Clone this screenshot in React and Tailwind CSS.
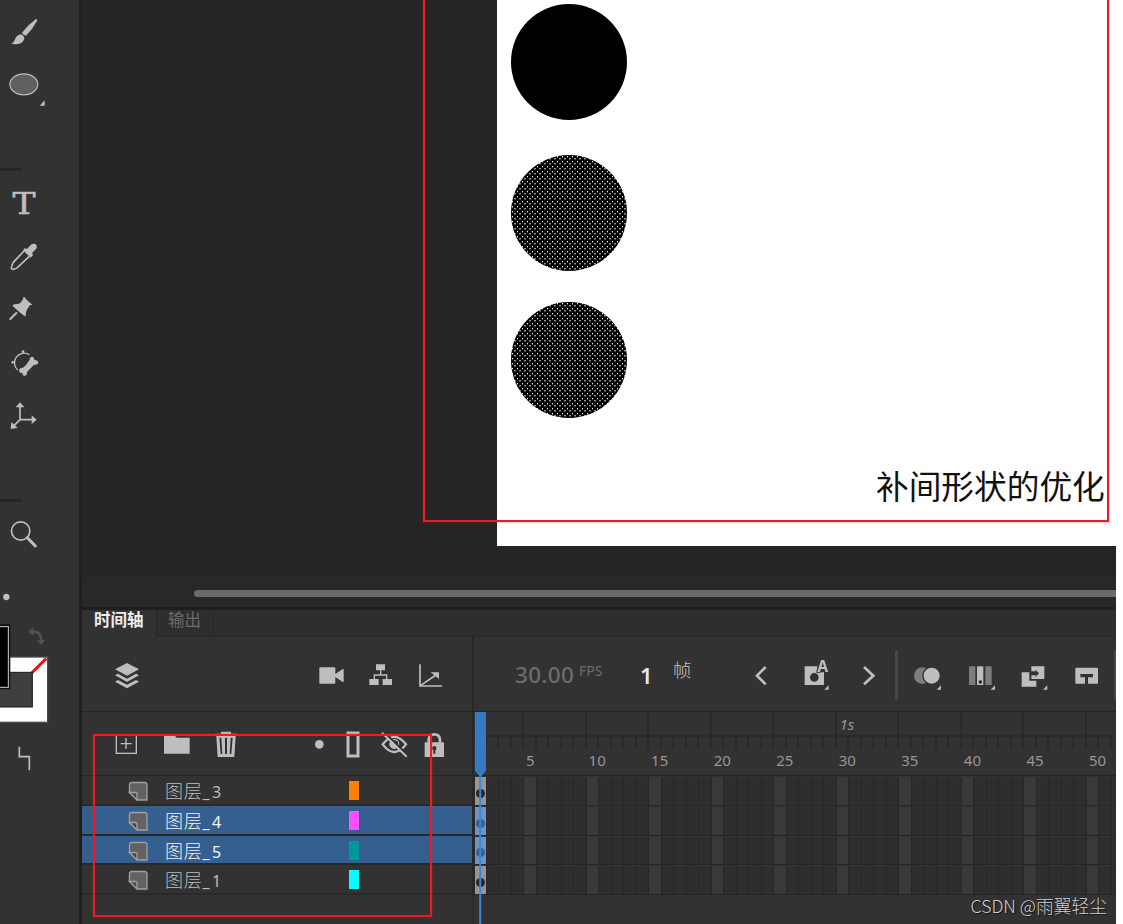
import React from "react";

const G = "#bebebe";

function Glyph({ w, h, box, className = "", children }) {
  return (
    <svg width={w} height={h} viewBox={box} className={"block shrink-0 " + className} fill="none">
      {children}
    </svg>
  );
}

function Toolbar() {
  return (
    <aside className="flex h-[924px] w-[82px] shrink-0 flex-col border-r-3 border-[#1f1f1f] bg-[#323232]">
      <Glyph w={79} h={60} box="0 0 237 180">
        <path d="M108 57Q113 57 111 63Q97 89 78 107Q71 107 66 98Q85 73 108 57Z" fill={G} />
        <path d="M62 103Q72 106 73 116Q68 133 46 133L34 131Q42 128 44 120Q48 107 62 103Z" fill={G} />
      </Glyph>
      <Glyph w={79} h={60} box="0 180 237 180">
        <ellipse cx="71.500" cy="253" rx="42" ry="31.500" fill="#606060" stroke={G} strokeWidth="3.500" />
        <path d="M134 301V317H119Z" fill={G} />
      </Glyph>
      <div className="mt-[48px] h-[3px] w-[21px] bg-[#262626]" />
      <div className="flex h-[59px] w-[48px] scale-x-115 items-center justify-center pt-[6px] font-['DejaVu_Serif'] text-[30px] leading-none text-[#bebebe] [-webkit-text-stroke:0.600px_#bebebe]">
        T
      </div>
      <Glyph w={79} h={55} box="0 0 237 165">
        <path d="M72 63L40 97Q32 112 35 116Q40 121 52 113L88 79" stroke={G} strokeWidth="5" />
        <path d="M69 61L75 54L80 58L92 45Q98 39 106 42Q114 48 108 57L96 69L99 75L92 83Z" fill={G} />
      </Glyph>
      <Glyph w={79} h={55} box="0 165 237 165">
        <path d="M71 200Q77 202 77 207L97 224L90 226Q86 230 79 244L76 260L57 245L38 228Q38 223 44 223L57 221Q68 214 71 200Z" fill={G} />
        <path d="M49 249L31 267" stroke={G} strokeWidth="6" strokeLinecap="round" />
      </Glyph>
      <Glyph w={79} h={52} box="0 330 237 156">
        <path d="M88 374A29 29 0 0 0 53 420" stroke={G} strokeWidth="4" />
        <circle cx="69" cy="365" r="4" fill={G} />
        <circle cx="38" cy="397" r="4" fill={G} />
        <path d="M89 389Q89 380 97 380Q104 383 103 390Q113 389 115 398Q113 406 102 404L81 426Q82 437 73 438Q66 436 68 429Q58 431 57 422Q58 412 69 413L78 405Z" fill={G} />
      </Glyph>
      <Glyph w={79} h={58} box="0 486 237 174">
        <path d="M60 528V569H99M60 569L40 589" stroke={G} strokeWidth="5" />
        <path d="M47 532L60 517L73 532ZM95 556L110 569L95 582ZM34 576L32 597L53 594Z" fill={G} />
      </Glyph>
      <div className="mt-[49px] h-[3px] w-[21px] bg-[#262626]" />
      <Glyph w={79} h={68} box="0 66 237 204">
        <circle cx="62" cy="153" r="27.500" stroke={G} strokeWidth="5" />
        <path d="M82 173L106 198" stroke={G} strokeWidth="9" strokeLinecap="round" />
      </Glyph>
      <Glyph w={79} h={174} box="0 270 237 522">
        <circle cx="19" cy="351" r="9.500" fill={G} />
        <path d="M96 455Q122 452 124 481" stroke="#515151" strokeWidth="8" />
        <path d="M85 455L100 442V468ZM110 480H136L124 495Z" fill="#515151" />
        <rect x="-6" y="531" width="149" height="196" fill="#fff" stroke="#4a4a4a" strokeWidth="4" />
        <path d="M95 579L139 535" stroke="#f01010" strokeWidth="9" />
        <rect x="-6" y="577" width="103" height="104" fill="#3f3f3f" stroke="#161616" strokeWidth="3" />
        <rect x="-6" y="433" width="37" height="195" fill="#111" />
        <rect x="-6" y="440" width="31" height="182" fill="#000" stroke="#d0d0d0" strokeWidth="3" />
      </Glyph>
      <Glyph w={79} h={40} box="0 792 237 120">
        <path d="M58 800V830H88V871" stroke={G} strokeWidth="5" />
      </Glyph>
    </aside>
  );
}

function DottedDisc() {
  return (
    <Glyph w={116} h={116} box="0 0 116 116">
      <defs>
        <pattern id="dots" width="5" height="5" patternUnits="userSpaceOnUse">
          <rect width="5" height="5" fill="#000" />
          <rect x="1" y="1" width="1" height="1" fill="#fff" />
          <rect x="1" y="2" width="1" height="1" fill="#555" />
          <rect x="3" y="3" width="2" height="1" fill="#909090" />
          <rect x="3" y="4" width="2" height="1" fill="#404040" />
        </pattern>
      </defs>
      <circle cx="58" cy="58" r="58" fill="url(#dots)" />
    </Glyph>
  );
}

function Stage() {
  return (
    <section className="flex h-[607px] flex-col bg-[#252525]">
      <div className="flex h-[546px] pl-[415px]">
        <div className="flex h-full flex-1 flex-col bg-white pl-[14px] pt-[3.500px]">
          <div className="size-[116px] rounded-full bg-black" />
          <div className="mt-[35.500px]"><DottedDisc /></div>
          <div className="mt-[31px]"><DottedDisc /></div>
          <p className="mt-[43px] whitespace-nowrap pl-[365px] font-['Noto_Sans_CJK_SC',sans-serif] text-[32.700px] leading-[48px] text-[#111]">
            补间形状的优化
          </p>
        </div>
      </div>
      <div className="mt-[31px] flex h-[30px] bg-[#282828] pl-[112px] pt-[13px]">
        <div className="h-[7px] flex-1 rounded-l-full bg-[#6b6b6b]" />
      </div>
    </section>
  );
}

function LeftControls() {
  return (
    <div className="flex h-[75px] w-[392px] shrink-0 border-r-2 border-[#282828]">
      <Glyph w={28} h={74} box="99 171 84 222" className="ml-[31px]">
        <path d="M141 249L177 268L141 287L105 268ZM105 286L114 281L141 296L168 281L177 286L141 306ZM105 305L114 300L141 314L168 300L177 305L141 325Z" fill={G} />
      </Glyph>
      <Glyph w={27} h={74} box="714 171 81 222" className="ml-[177px]">
        <path d="M721 262H763Q766 262 766 265V282L788 267H791V306H788L766 291V308Q766 311 763 311H721Q718 311 718 308V265Q718 262 721 262Z" fill={G} />
      </Glyph>
      <Glyph w={25} h={74} box="864 171 75 222" className="ml-[23px]">
        <path d="M888 253H915V271H888ZM868 297H896V315H868ZM908 297H936V315H908Z" fill={G} />
        <path d="M902 271V284M883 297V285H920V297" stroke={G} strokeWidth="4" />
      </Glyph>
      <Glyph w={25} h={74} box="1014 171 75 222" className="ml-[25px]">
        <path d="M1020 253V318H1086M1021 317L1068 285" stroke={G} strokeWidth="5" />
        <path d="M1052 277H1077V297Z" fill={G} />
      </Glyph>
    </div>
  );
}

const corner = (x, y) => <path d={`M${x} ${y - 13}V${y}H${x - 13}Z`} fill={G} />;

function RightControls() {
  return (
    <div className="flex h-[75px] min-w-0 flex-1 font-['Noto_Sans','Noto_Sans_CJK_SC',sans-serif]">
      <span className="ml-[41px] mt-[23px] w-[64px] text-[22.500px] font-medium leading-[30px] tracking-[0.300px] text-[#6c6c6c]">30.00</span>
      <span className="mt-[24px] w-[61px] text-[14px] leading-[20px] text-[#6c6c6c]">FPS</span>
      <span className="mt-[23px] w-[33px] text-[22px] font-semibold leading-[30px] text-[#e8e8e8]">1</span>
      <span className="mt-[19px] w-[82px] font-['Noto_Sans_CJK_SC',sans-serif] text-[18.500px] font-light leading-[26px] text-[#c8c8c8]">帧</span>
      <Glyph w={12} h={74} box="885 -9 36 222">
        <path d="M917 81L891 107L917 133" stroke={G} strokeWidth="8" />
      </Glyph>
      <Glyph w={27} h={74} box="69 -9 81 222" className="ml-[36px]">
        <path fillRule="evenodd" d="M74 79H112L110 97H132V135H74ZM103 99A13 13 0 1 0 103 125A13 13 0 1 0 103 99Z" fill={G} />
        <text x="128" y="97" textAnchor="middle" fontFamily="Noto Sans" fontWeight="700" fontSize="47" fill={G} stroke="#323232" strokeWidth="5" paintOrder="stroke">A</text>
        {corner(146, 149)}
      </Glyph>
      <Glyph w={14} h={74} box="246 -9 42 222" className="ml-[32px]">
        <path d="M252 81L280 107L252 133" stroke={G} strokeWidth="8" />
      </Glyph>
      <div className="ml-[19px] mt-[13px] h-[50px] w-[3px] rounded-full bg-[#474747]" />
      <Glyph w={29} h={74} box="399 -9 87 222" className="ml-[15px]">
        <circle cx="427" cy="107" r="25" fill="#7d7d7d" />
        <circle cx="455" cy="107" r="26" fill={G} stroke="#323232" strokeWidth="4" />
        {corner(483, 149)}
      </Glyph>
      <Glyph w={28} h={74} box="564 -9 84 222" className="ml-[26px]">
        <path d="M567 79H586V135H567ZM616 79H635V135H616Z" fill="#7d7d7d" />
        <path d="M591 79H610V135H591Z" fill={G} />
        <circle cx="601" cy="126" r="5" fill="#222" />
        {corner(645, 149)}
      </Glyph>
      <Glyph w={27} h={74} box="723 -9 81 222" className="ml-[25px]">
        <path d="M725 97H748V122H769V140H725Z" fill={G} />
        <path d="M754 79H793V117H754V106H765V94H754Z" fill={G} />
        <path d="M752 100H770" stroke="#323232" strokeWidth="5" />
        <path d="M766 89L777 100L766 111Z" fill="#323232" />
        {corner(802, 149)}
      </Glyph>
      <Glyph w={25} h={74} box="882 -9 75 222" className="ml-[26px]">
        <path d="M889 83H951Q954 83 954 86V128Q954 131 951 131H924V112H939V102H901V112H915V131H889Q886 131 886 128V86Q886 83 889 83Z" fill={G} />
      </Glyph>
      <div className="ml-auto mt-[13px] h-[50px] w-[2px] bg-[#474747]" />
    </div>
  );
}

function LayerTools() {
  return (
    <div className="flex h-[64px] w-[392px] shrink-0 border-r-2 border-[#282828]">
      <Glyph w={23} h={63} box="105 396 69 189" className="ml-[33px]">
        <rect x="109" y="464" width="60" height="56" stroke={G} strokeWidth="4" />
        <path d="M122 491H155M138 474V507" stroke={G} strokeWidth="4" />
      </Glyph>
      <Glyph w={28} h={63} box="249 396 84 189" className="ml-[25px]">
        <path d="M252 463H281L290 473H329V521H252Z" fill={G} />
      </Glyph>
      <Glyph w={24} h={63} box="402 396 72 189" className="ml-[23px]">
        <path fillRule="evenodd" d="M405 461H423V455H453V461H471V468H467L463 531H413L409 468H405ZM418 473L422 522H427L424 473ZM435 473V522H441V473ZM452 473L449 522H454L458 473Z" fill={G} />
      </Glyph>
      <Glyph w={11} h={63} box="702 396 33 189" className="ml-[76px]">
        <circle cx="718" cy="493" r="13" fill={G} />
      </Glyph>
      <Glyph w={14} h={63} box="798 396 42 189" className="ml-[21px]">
        <rect x="804" y="459" width="30" height="69" stroke={G} strokeWidth="9" />
      </Glyph>
      <Glyph w={27} h={63} box="903 396 81 189" className="ml-[21px]">
        <path d="M908 493Q943 448 978 493Q943 539 908 493Z" stroke={G} strokeWidth="7" />
        <circle cx="943" cy="492" r="15" fill={G} />
        <path d="M943 480Q955 482 955 492H944Z" fill="#323232" />
        <path d="M911 455L985 527" stroke="#323232" strokeWidth="6" />
        <path d="M906 458L980 530" stroke={G} strokeWidth="6" />
      </Glyph>
      <Glyph w={21} h={63} box="1032 396 63 189" className="ml-[16px]">
        <path d="M1046 488V478Q1048 463 1063 463Q1078 463 1080 478V488" stroke={G} strokeWidth="8" />
        <path fillRule="evenodd" d="M1034 487H1092V531H1034ZM1063 498A7 7 0 0 0 1060 511V521H1066V511A7 7 0 0 0 1063 498Z" fill={G} />
      </Glyph>
    </div>
  );
}

const groups = [0, 5, 10, 15, 20, 25, 30, 35, 40, 45, 50];
const frames = Array.from({ length: 52 }, (_, i) => i + 1);

function Ruler() {
  return (
    <div className="h-[64px] min-w-0 flex-1 overflow-hidden font-['Noto_Sans',sans-serif] text-[#969696]">
      <div className="flex h-[25px] border-b-2 border-[#2a2a2a]">
        {groups.map((g) => (
          <div key={g} className={(g === 0 ? "w-[50px]" : "w-[62.500px]") + " shrink-0 border-r-2 border-[#2a2a2a]"}>
            {g === 30 && <span className="ml-[3px] block text-[15px] italic leading-[25px]">1s</span>}
          </div>
        ))}
      </div>
      <div className="flex h-[12px]">
        {frames.map((f) => (
          <div key={f} className="w-[12.500px] shrink-0 border-r-2 border-[#2a2a2a]" />
        ))}
      </div>
      <div className="flex pl-[50px] text-[15px] leading-[23px]">
        {groups.slice(1).map((g) => (
          <span key={g} className="w-[62.560px] shrink-0 pl-[2px]">{g}</span>
        ))}
      </div>
    </div>
  );
}

const layers = [
  { n: 3, color: "bg-[#ff8000]", on: false, h: "h-[30px]" },
  { n: 4, color: "bg-[#ff4fff]", on: true, h: "h-[30px]" },
  { n: 5, color: "bg-[#009999]", on: true, h: "h-[29px]" },
  { n: 1, color: "bg-[#00ffff]", on: false, h: "h-[30px]" },
];

function LayerRow({ n, color, on, h }) {
  return (
    <div className={"flex " + h}>
      <div
        className={
          "flex w-[392px] shrink-0 items-start border-b-2 border-r-2 border-[#292929] pl-[46px] " +
          (on ? "bg-[#345f8f] text-[#f4f4f4]" : "bg-[#323232] text-[#bdbdbd]")
        }
      >
        <Glyph w={20} h={20} box="0 0 20 20" className="mt-[4.500px]">
          <path d="M3 1.500H17.500L19 3V19H9.500L1.500 11.500V3Z" fill="#626262" stroke="#a0a0a0" strokeWidth="1.300" />
          <path d="M1.500 11.500H7.500Q9 11.500 9 13V19Z" fill="#484848" stroke="#a0a0a0" strokeWidth="1.300" />
        </Glyph>
        <div className="ml-[17px] flex w-[184px] whitespace-nowrap leading-[28px]">
          <span className="font-['Noto_Sans_CJK_SC',sans-serif] text-[18px] font-light tracking-[0.700px]">图层</span>
          <span className="mt-[2px] font-['Noto_Sans',sans-serif] text-[16px] tracking-[2.500px]">_{n}</span>
        </div>
        <div className={"mt-[5px] h-[19px] w-[10px] " + color} />
      </div>
      <div className="flex min-w-0 flex-1 overflow-hidden border-b border-[#262626] pt-px">
        {frames.map((f) =>
          f === 1 ? (
            <div key={f} className={"flex w-[12.500px] shrink-0 items-end justify-center border-x border-[#292929] pb-[7px] " + (on ? "bg-[#6f94c3]" : "bg-[#969696]")}>
              <div className={"size-[9px] shrink-0 rounded-full " + (on ? "bg-[#34608f]" : "bg-[#272727]")} />
            </div>
          ) : (
            <div key={f} className={"w-[12.500px] shrink-0 border-r border-[#272727] " + (f % 5 === 0 ? "bg-[#393939]" : "bg-[#2e2e2e]")} />
          )
        )}
      </div>
    </div>
  );
}

function Timeline() {
  return (
    <section className="relative flex h-[317px] flex-col overflow-hidden border-t-3 border-[#1f1f1f] bg-[#323232]">
      <div className="flex h-[27px] font-['Noto_Sans_CJK_SC',sans-serif] text-[16.500px] leading-[19px]">
        <div className="w-[75px] border-r border-[#272727] pl-[12px] font-bold text-[#eeeeee]">时间轴</div>
        <div className="w-[57px] border-b border-r border-[#272727] bg-[#2e2e2e] pl-[11px] text-[#6b6b6b]">输出</div>
        <div className="flex-1 border-b border-[#272727] bg-[#2e2e2e]" />
      </div>
      <div className="flex h-[75px] border-b border-[#252525]">
        <LeftControls />
        <RightControls />
      </div>
      <div className="flex h-[64px] border-b border-[#252525]">
        <LayerTools />
        <Ruler />
      </div>
      {layers.map((l) => (
        <LayerRow key={l.n} {...l} />
      ))}
      <div className="w-[392px] flex-1 border-r-2 border-[#2d2d2d]" />
      <p className="absolute right-[9px] top-[282px] whitespace-nowrap font-['Noto_Sans_CJK_SC',sans-serif] text-[17.750px] font-light leading-[26px] text-[#d0d0d0] [text-shadow:1px_1px_1px_#111]">
        CSDN @雨翼轻尘
      </p>
      <svg width="12" height="212" viewBox="0 0 12 212" className="absolute left-[393px] top-[102px]">
        <path d="M0 0H11V59L5.500 65L0 59Z" fill="#3679c4" />
        <path d="M5.200 62V212" stroke="#3d86d8" strokeWidth="2" />
      </svg>
    </section>
  );
}

export default function App() {
  return (
    <main className="relative flex h-[924px] w-[1123px] overflow-hidden bg-white">
      <Toolbar />
      <div className="w-[1034px] shrink-0">
        <Stage />
        <Timeline />
      </div>
      <div className="pointer-events-none absolute -top-[10px] left-[423px] h-[532px] w-[686px] border-2 border-[#ed1c24] shadow-[0_0_1px_#ed1c24]" />
      <div className="pointer-events-none absolute left-[93px] top-[734px] h-[183px] w-[339px] border-2 border-[#ed1c24] shadow-[0_0_1px_#ed1c24]" />
    </main>
  );
}
